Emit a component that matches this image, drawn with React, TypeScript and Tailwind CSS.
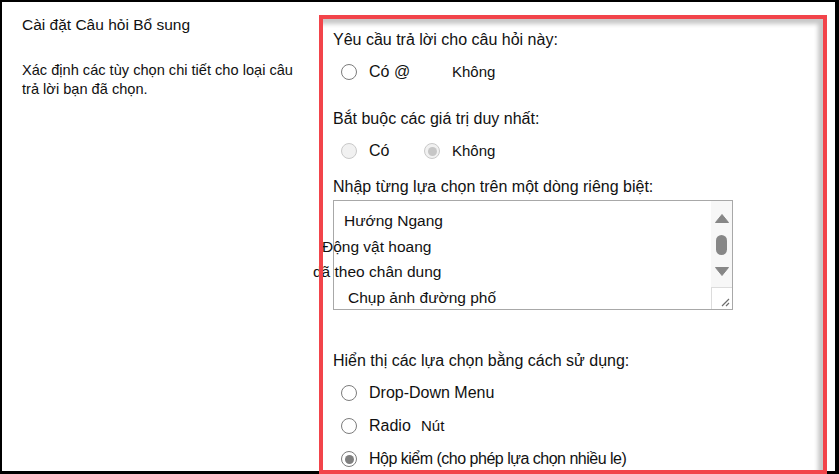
import React from 'react';

type RadioProps = {
  checked?: boolean;
  disabled?: boolean;
};

function Radio({ checked = false, disabled = false }: RadioProps) {
  const ring = disabled ? 'border-[#c9c9c9] bg-[#f1f1f1]' : 'border-[#7c7c7c] bg-white';
  const dot = disabled ? 'bg-[#c6c6c6]' : 'bg-[#7f7f7f]';
  return (
    <span className={`flex h-4 w-4 shrink-0 items-center justify-center rounded-full border-[1.5px] ${ring}`}>
      {checked && <span className={`h-[9px] w-[9px] rounded-full ${dot}`} />}
    </span>
  );
}

function ScrollTrack() {
  return (
    <div className="flex w-[21px] flex-col bg-[#f7f7f7]">
      <div className="flex flex-1 flex-col items-center pt-[13px]">
        <svg width="14" height="9" viewBox="0 0 14 9">
          <path d="M7 0.5 L13.5 8.5 L0.5 8.5 Z" fill="#878787" strokeLinejoin="round" stroke="#878787" />
        </svg>
        <div className="mt-[12px] h-[20px] w-[11px] rounded-full bg-[#878787]" />
        <svg className="mt-[12px]" width="14" height="9" viewBox="0 0 14 9">
          <path d="M0.5 0.5 L13.5 0.5 L7 8.5 Z" fill="#878787" strokeLinejoin="round" stroke="#878787" />
        </svg>
      </div>
      <div className="relative h-[22px] border-l border-t border-[#dcdcdc] bg-white">
        <svg className="absolute bottom-[2px] right-[2px]" width="10" height="10" viewBox="0 0 10 10">
          <path d="M9 2 L2 9 M9 6 L6 9" stroke="#6d6d6d" strokeWidth="1.2" />
        </svg>
      </div>
    </div>
  );
}

export default function App() {
  const choices = [
    { text: 'Hướng Ngang', indent: 'ml-[10px]' },
    { text: 'Động vật hoang', indent: '-ml-[12px]' },
    { text: 'dã theo chân dung', indent: '-ml-[21px]' },
    { text: 'Chụp ảnh đường phố', indent: 'ml-[14px]' },
  ];

  return (
    <div
      className="h-[474px] w-[839px] overflow-hidden bg-black pb-[3px] pl-[2px] pr-[4px] pt-[2px] text-[#111]"
      style={{ fontFamily: '"Liberation Sans", Arial, sans-serif' }}
    >
      <div className="relative flex h-full bg-white">
        <div className="w-[317px] shrink-0 pl-[20px] pt-[13px]">
          <div className="text-[15.5px] leading-[20px]">Cài đặt Câu hỏi Bổ sung</div>
          <p className="mt-[26px] w-[285px] text-[14.6px] leading-[19px]">
            Xác định các tùy chọn chi tiết cho loại câu trả lời bạn đã chọn.
          </p>
        </div>

        <div className="flex-1 pl-[14px] pt-[28px] text-[16px] leading-[20px]">
          <div>Yêu cầu trả lời cho câu hỏi này:</div>
          <div className="mt-[12px] flex h-[20px] items-center pl-[8px]">
            <Radio />
            <span className="ml-[12px] w-[83px]">Có @</span>
            <span className="text-[15px]">Không</span>
          </div>

          <div className="mt-[27px]">Bắt buộc các giá trị duy nhất:</div>
          <div className="mt-[12px] flex h-[20px] items-center pl-[8px]">
            <Radio disabled />
            <span className="ml-[12px] w-[55px]">Có</span>
            <Radio disabled checked />
            <span className="ml-[12px] text-[15px]">Không</span>
          </div>

          <div className="mt-[16px]">Nhập từng lựa chọn trên một dòng riêng biệt:</div>
          <div className="mt-[3px] flex h-[110px] w-[400px] border border-[#a8a8a8] bg-white">
            <div className="flex-1 pt-[7px] text-[15.5px] leading-[25.5px]">
              {choices.map((c) => (
                <div key={c.text} className={`whitespace-nowrap ${c.indent}`}>
                  {c.text}
                </div>
              ))}
            </div>
            <ScrollTrack />
          </div>

          <div className="mt-[41px]">Hiển thị các lựa chọn bằng cách sử dụng:</div>
          <div className="mt-[12px] flex h-[20px] items-center pl-[8px]">
            <Radio />
            <span className="ml-[12px]">Drop-Down Menu</span>
          </div>
          <div className="mt-[13px] flex h-[20px] items-center pl-[8px]">
            <Radio />
            <span className="ml-[12px] w-[52px]">Radio</span>
            <span className="text-[15px]">Nút</span>
          </div>
          <div className="mt-[13px] flex h-[20px] items-center pl-[8px]">
            <Radio checked />
            <span className="ml-[12px] tracking-[-0.5px]">Hộp kiểm (cho phép lựa chọn nhiều le)</span>
          </div>
        </div>

        {/* annotation frame drawn over the settings panel */}
        <div className="pointer-events-none absolute left-[317px] top-[13px] h-[459px] w-[508px] border-4 border-[#f2444a] shadow-[inset_-5px_5px_4px_rgba(0,0,0,0.22)]" />
      </div>
    </div>
  );
}
